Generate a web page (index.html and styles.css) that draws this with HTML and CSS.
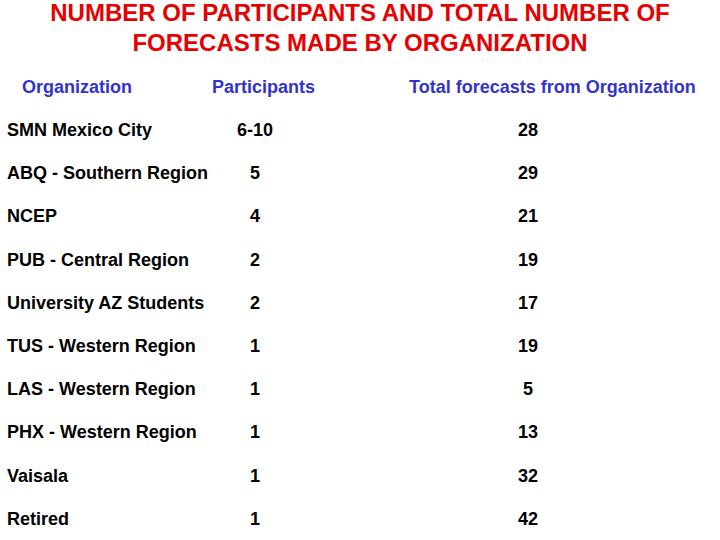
FILE: index.html
```html
<!DOCTYPE html>
<html>
<head>
<meta charset="utf-8">
<link rel="stylesheet" href="styles.css">
</head>
<body>
<div class="slide">
  <h1 class="title">NUMBER OF PARTICIPANTS AND TOTAL NUMBER OF<br>FORECASTS MADE BY ORGANIZATION</h1>
  <div class="head">
    <span>Organization</span>
    <span>Participants</span>
    <span>Total forecasts from Organization</span>
  </div>
  <div class="table">
    <div class="row"><span class="org">SMN Mexico City</span><span class="num">6-10</span><span class="tot">28</span></div>
    <div class="row"><span class="org">ABQ - Southern Region</span><span class="num">5</span><span class="tot">29</span></div>
    <div class="row"><span class="org">NCEP</span><span class="num">4</span><span class="tot">21</span></div>
    <div class="row"><span class="org">PUB - Central Region</span><span class="num">2</span><span class="tot">19</span></div>
    <div class="row"><span class="org">University AZ Students</span><span class="num">2</span><span class="tot">17</span></div>
    <div class="row"><span class="org">TUS - Western Region</span><span class="num">1</span><span class="tot">19</span></div>
    <div class="row"><span class="org">LAS - Western Region</span><span class="num">1</span><span class="tot">5</span></div>
    <div class="row"><span class="org">PHX - Western Region</span><span class="num">1</span><span class="tot">13</span></div>
    <div class="row"><span class="org">Vaisala</span><span class="num">1</span><span class="tot">32</span></div>
    <div class="row"><span class="org">Retired</span><span class="num">1</span><span class="tot">42</span></div>
  </div>
</div>
</body>
</html>
```

FILE: styles.css
```css
html, body {
  margin: 0;
  padding: 0;
  background: #ffffff;
}
body {
  width: 720px;
  height: 540px;
  overflow: hidden;
  font-family: "Liberation Sans", Arial, sans-serif;
}
.slide {
  width: 720px;
}
.title {
  margin: -2px 0 0;
  font-size: 24px;
  line-height: 30px;
  font-weight: bold;
  color: #e60000;
  text-align: center;
}
.head {
  margin-top: 19px;
  display: grid;
  grid-template-columns: 190px 197px auto;
  padding-left: 22px;
  font-size: 18px;
  font-weight: bold;
  color: #3333cc;
  line-height: 21px;
}
.table {
  margin-top: 11px;
  padding-left: 7px;
}
.row {
  display: grid;
  grid-template-columns: 208px 80px 1fr;
  height: 43.2px;
  line-height: 43.2px;
  font-size: 18px;
  font-weight: bold;
  color: #000000;
}
.num {
  text-align: center;
}
.tot {
  padding-left: 41px;
  text-align: center;
}
```
